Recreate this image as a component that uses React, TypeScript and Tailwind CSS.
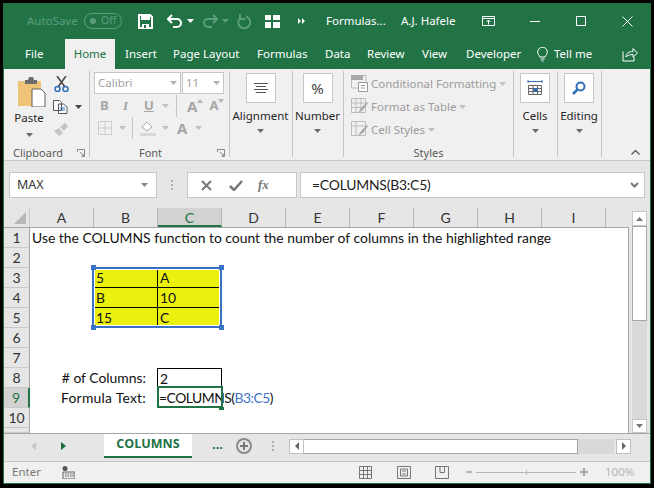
import { FunctionComponent, ReactNode } from "react";

const Caret: FunctionComponent<{ c?: string; className?: string }> = ({ c = "#6b6b6b", className = "" }) => (
  <svg width="7" height="4" viewBox="0 0 7 4" className={`shrink-0 ${className}`}>
    <path d="M0 0h7L3.5 4z" fill={c} />
  </svg>
);

const TinyUp: FunctionComponent<{ c?: string; down?: boolean; className?: string }> = ({ c = "#b5b5b5", down, className = "" }) => (
  <svg width="6" height="4" viewBox="0 0 6 4" className={className}>
    <path d={down ? "M0 0h6L3 4z" : "M3 0l3 4H0z"} fill={c} />
  </svg>
);

const TitleBar: FunctionComponent = () => (
  <div className="h-[36px] flex flex-row items-center text-white text-[11.5px] relative">
    <span className="ml-[23px] w-[57px] shrink-0 text-[#5c9c7d]">AutoSave</span>
    <div className="w-[38px] h-[16px] rounded-full border border-[#5c9c7d] flex flex-row items-center text-[#5c9c7d] text-[10.5px] shrink-0">
      <span className="w-[6px] h-[6px] rounded-full bg-[#5c9c7d] ml-[5px] mr-[5px]" />
      <span>Off</span>
    </div>
    <svg width="15" height="15" viewBox="0 0 15 15" className="ml-[16px] shrink-0">
      <path d="M1 1h11l2 2v11H1z" fill="none" stroke="#fff" strokeWidth="2" />
      <path d="M3 2h9v4H3zM4 10h7v4H4z" fill="#fff" />
      <path d="M6 11h2v3H6z" fill="#217346" />
    </svg>
    <svg width="16" height="14" viewBox="0 0 16 14" className="ml-[14px] shrink-0">
      <path d="M1 5h9a4 4 0 0 1 0 8H6M5 1 1 5l4 4" fill="none" stroke="#fff" strokeWidth="2" />
    </svg>
    <Caret c="#fff" className="ml-[4px]" />
    <svg width="16" height="14" viewBox="0 0 16 14" className="ml-[8px] shrink-0">
      <path d="M15 5H6a4 4 0 0 0 0 8h4M11 1l4 4-4 4" fill="none" stroke="#5c9c7d" strokeWidth="2" />
    </svg>
    <Caret c="#5c9c7d" className="ml-[4px]" />
    <svg width="14" height="15" viewBox="0 0 14 15" className="ml-[8px] shrink-0">
      <path d="M9 2.5a6 6 0 1 1-6 1.5M3 0v5h5" fill="none" stroke="#5c9c7d" strokeWidth="2" />
    </svg>
    <svg width="15" height="13" viewBox="0 0 15 13" className="ml-[14px] shrink-0">
      <path d="M0 0h6v5H0zM8 0h7v5H8zM0 7h6v6H0zM8 7h7v6H8z" fill="#fff" />
    </svg>
    <svg width="7" height="6" viewBox="0 0 7 6" className="ml-[18px] shrink-0">
      <path d="M0 0l3 3-3 3zM4 0l3 3-3 3z" fill="#fff" />
    </svg>
    <span className="ml-[21px] w-[75px] shrink-0">Formulas...</span>
    <span className="w-[81px] shrink-0">A.J. Hafele</span>
    <svg width="13" height="10" viewBox="0 0 13 10" className="shrink-0">
      <path d="M.5.5h12v9H.5zM.5 2.500h12M6.500 8.500V4M4.500 6l2-2 2 2" fill="none" stroke="#fff" />
    </svg>
    <span className="w-[10px] h-px bg-white ml-[35px] shrink-0" />
    <span className="w-[10px] h-[10px] border border-white ml-[36px] shrink-0" />
    <svg width="11" height="11" viewBox="0 0 11 11" className="ml-[36px] shrink-0">
      <path d="M.5.5l10 10M10.500.5l-10 10" stroke="#fff" />
    </svg>
  </div>
);

const tabs = [
  { label: "Insert", cls: "w-[48px] pl-[10px]" },
  { label: "Page Layout", cls: "w-[84px] pl-[10px]" },
  { label: "Formulas", cls: "w-[68px] pl-[10px]" },
  { label: "Data", cls: "w-[43px] pl-[10px]" },
  { label: "Review", cls: "w-[55px] pl-[9px]" },
  { label: "View", cls: "w-[44px] pl-[9px]" },
  { label: "Developer", cls: "w-[71px] pl-[9px]" },
];

const TabBar: FunctionComponent = () => (
  <div className="h-[30px] flex flex-row items-stretch text-white text-[11.5px]">
    <span className="w-[61px] pl-[21px] flex items-center">File</span>
    <span className="w-[50px] bg-[#f0f0f0] text-[#217346] flex items-center justify-center">Home</span>
    {tabs.map((t) => (
      <span key={t.label} className={`flex items-center shrink-0 ${t.cls}`}>
        {t.label}
      </span>
    ))}
    <div className="flex flex-row items-center ml-[9px]">
      <svg width="11" height="15" viewBox="0 0 11 15" className="shrink-0">
        <path d="M3 10C2 8 .7 7.500.7 5a4.800 4.800 0 0 1 9.600 0C10.300 7.500 9 8 8 10zM3.500 12h4M4.500 14h2" fill="none" stroke="#fff" />
      </svg>
      <span className="ml-[6px] w-[68px] shrink-0">Tell me</span>
      <svg width="16" height="15" viewBox="0 0 16 15" className="shrink-0">
        <path d="M1 4.500V14h11V10M4 10c0-4 3-5.500 7-5.500V1.500l4.500 4.500L11 10V7.500C8 7.500 6 8 4 10z" fill="none" stroke="#fff" />
      </svg>
    </div>
  </div>
);

const Group: FunctionComponent<{ w: string; label?: string; expand?: boolean; children: ReactNode }> = ({
  w,
  label,
  expand,
  children,
}) => (
  <div className={`h-[86px] mt-[2px] border-r border-[#c6c6c6] flex flex-col relative shrink-0 ${w}`}>
    <div className="flex-1 min-h-0">{children}</div>
    <div className={`h-[18px] text-center text-[11px] leading-[27px] text-[#5a5a5a] ${expand ? "pr-[18px]" : ""}`}>{label}</div>
    {expand && (
      <svg width="8" height="8" viewBox="0 0 8 8" className="absolute right-[4px] bottom-0">
        <path d="M.5 3V.5h7v7H5M3 3l4 4M4.500 7H7V4.500" fill="none" stroke="#8a8a8a" />
      </svg>
    )}
  </div>
);

const BigButton: FunctionComponent<{ w: string; label: string; children: ReactNode }> = ({ w, label, children }) => (
  <div className={`flex flex-col items-center ${w}`}>
    <div className="w-[30px] h-[30px] mt-[2px] bg-white border border-[#c6c6c6] flex items-center justify-center">{children}</div>
    <span className="text-[11.5px] leading-[16px] text-[#262626] mt-[5px] whitespace-nowrap">{label}</span>
    <Caret className="mt-[5px]" />
  </div>
);

const StyleRow: FunctionComponent<{ label: string; children: ReactNode }> = ({ label, children }) => (
  <div className="h-[23px] flex flex-row items-center text-[#9c9c9c] text-[11.5px]">
    <span className="w-[17px] h-[17px] mr-[3px] ml-[7px] shrink-0">{children}</span>
    <span className="whitespace-nowrap">{label}</span>
    <Caret c="#c0c0c0" className="ml-[3px]" />
  </div>
);

const Ribbon: FunctionComponent = () => (
  <div className="h-[92px] bg-[#f0f0f0] flex flex-row pl-[1px] border-b border-[#c9c9c9] box-border relative">
    <Group w="w-[85px]" label="Clipboard" expand>
      <div className="flex flex-row">
        <div className="w-[48px] flex flex-col items-center">
          <svg width="29" height="30" viewBox="0 0 29 30" className="mt-[6px] ml-[4px]">
            <path d="M1 4h23v25H1z" fill="#efc477" />
            <path d="M8 3h3l1-3h4l1 3h3v4H8z" fill="#6d6d6d" />
            <path d="M15 12h9l4 4v14H15z" fill="#fff" stroke="#5f5f5f" />
          </svg>
          <span className="text-[11.5px] leading-[16px] text-[#262626] mt-[3px]">Paste</span>
          <Caret className="mt-[7px]" />
        </div>
        <div className="flex flex-col">
          <svg width="15" height="16" viewBox="0 0 15 16" className="mt-[5px] ml-[1px]">
            <path d="M3 0l8 11M12 0 4 11" stroke="#444" strokeWidth="1.500" />
            <circle cx="3.500" cy="13" r="2.500" fill="none" stroke="#2f6fb5" strokeWidth="1.500" />
            <circle cx="11.500" cy="13" r="2.500" fill="none" stroke="#2f6fb5" strokeWidth="1.500" />
          </svg>
          <div className="flex flex-row items-center mt-[8px]">
            <svg width="15" height="14" viewBox="0 0 15 14">
              <path d="M.5.500h6l2 2v8H.5zM5.500 4h5l3.500 3v6.500H5.500z" fill="#fff" stroke="#555" />
              <path d="M7 8h5M7 10h5" stroke="#2f6fb5" />
            </svg>
            <Caret c="#444" className="ml-[7px]" />
          </div>
          <svg width="18" height="14" viewBox="0 0 18 14" className="mt-[9px]">
            <path d="M1 8l5-3 4 5-4 3zM7 4l5-4 3 3-4 5z" fill="#c4c4c4" />
          </svg>
        </div>
      </div>
    </Group>
    <Group w="w-[140px]" label="Font" expand>
      <div className="flex flex-row mt-[1px] ml-[4px]">
        <div className="w-[87px] h-[22px] bg-white border border-[#c6c6c6] flex flex-row items-center justify-between px-[3px] text-[11.5px] text-[#a0a0a0]">
          Calibri
          <Caret c="#b0b0b0" />
        </div>
        <div className="w-[42px] h-[22px] ml-[1px] bg-white border border-[#c6c6c6] flex flex-row items-center justify-between px-[3px] text-[11.5px] text-[#a0a0a0]">
          11
          <Caret c="#b0b0b0" />
        </div>
      </div>
      <div className="flex flex-row items-center h-[22px] ml-[10px] mt-[1px] text-[#a6a6a6] text-[13px]">
        <b className="w-[23px]">B</b>
        <i className="w-[21px] font-['Liberation_Serif',serif] font-bold">I</i>
        <u className="font-bold w-[14px]">U</u>
        <Caret c="#c0c0c0" className="ml-[4px]" />
        <span className="w-px h-[22px] bg-[#c6c6c6] ml-[7px]" />
        <span className="ml-[10px] text-[15px] font-bold">A</span>
        <TinyUp className="mb-[10px]" />
        <span className="ml-[6px] text-[13px] font-bold">A</span>
        <TinyUp down className="mb-[10px]" />
      </div>
      <div className="flex flex-row items-center h-[22px] ml-[8px]">
        <svg width="14" height="14" viewBox="0 0 14 14" className="shrink-0">
          <path d="M.5.500h13v13H.5zM7 .5v13M.5 7h13" fill="none" stroke="#aaa" strokeDasharray="1 1" />
        </svg>
        <Caret c="#c0c0c0" className="ml-[7px]" />
        <span className="w-px h-[22px] bg-[#c6c6c6] ml-[6px]" />
        <svg width="16" height="16" viewBox="0 0 16 16" className="ml-[7px] shrink-0">
          <path d="M2 7l5-5 5 5-5 4z" fill="#fff" stroke="#aaa" />
          <path d="M0 13h16v3H0z" fill="#d8d8d8" />
        </svg>
        <Caret c="#c0c0c0" className="ml-[6px]" />
        <span className="ml-[8px] text-[15px] font-bold text-[#a6a6a6] leading-none">A</span>
        <Caret c="#c0c0c0" className="ml-[8px]" />
      </div>
    </Group>
    <Group w="w-[63px]">
      <BigButton w="w-[61px]" label="Alignment">
        <svg width="14" height="10" viewBox="0 0 14 10">
          <path d="M0 .5h14M2 3.500h10M0 6.500h14M2 9.500h10" stroke="#555" />
        </svg>
      </BigButton>
    </Group>
    <Group w="w-[51px]">
      <BigButton w="w-[49px]" label="Number">
        <span className="text-[15px] text-[#444]">%</span>
      </BigButton>
    </Group>
    <Group w="w-[170px]" label="Styles">
      <div className="pt-[1px]">
        <StyleRow label="Conditional Formatting">
          <svg viewBox="0 0 17 17" className="w-[17px] h-[17px]">
            <path d="M0 0h12v5H0z" fill="#a8a8a8" />
            <path d="M.5 5v8h7M12 .5h3v6" fill="none" stroke="#bbb" />
            <path d="M7.500 7.500h9v9h-9zM10 10.500h4M10 13h4" fill="#fff" stroke="#999" />
          </svg>
        </StyleRow>
        <StyleRow label="Format as Table">
          <svg viewBox="0 0 17 17" className="w-[17px] h-[17px]">
            <path d="M.5.500h14v14H.5zM.5 5h14M.5 9.500h14M5 .5v14M10 .5v14" fill="none" stroke="#bbb" />
            <path d="M7 15l3-5 6-6 1 1-5 7z" fill="#aaa" />
          </svg>
        </StyleRow>
        <StyleRow label="Cell Styles">
          <svg viewBox="0 0 17 17" className="w-[17px] h-[17px]">
            <path d="M.5.500h14v14H.5zM.5 5h14M5 .5v14" fill="none" stroke="#bbb" />
            <path d="M7 15l3-5 6-6 1 1-5 7z" fill="#aaa" />
          </svg>
        </StyleRow>
      </div>
    </Group>
    <Group w="w-[44px]">
      <BigButton w="w-[42px]" label="Cells">
        <svg width="16" height="16" viewBox="0 0 16 16">
          <path d="M1 1.500h14M1 0v3M15 0v3" stroke="#2f6fb5" fill="none" />
          <path d="M1.500 5.500h13v9h-13zM1.500 8.500h13M1.500 11.500h13M6 5.500v9M10.500 5.500v9" stroke="#666" fill="none" />
          <path d="M6 8.500h5v3H6z" fill="#2f6fb5" />
        </svg>
      </BigButton>
    </Group>
    <Group w="w-[44px]">
      <BigButton w="w-[42px]" label="Editing">
        <svg width="14" height="14" viewBox="0 0 14 14">
          <circle cx="8.500" cy="5.500" r="4" fill="none" stroke="#2f6fb5" strokeWidth="2" />
          <path d="M5.500 8.500 1 13" stroke="#2f6fb5" strokeWidth="2.500" />
        </svg>
      </BigButton>
    </Group>
    <svg width="9" height="5" viewBox="0 0 9 5" className="absolute right-[10px] bottom-[5px]">
      <path d="M.5 4.500l4-4 4 4" fill="none" stroke="#555" strokeWidth="1.300" />
    </svg>
  </div>
);

const FormulaBar: FunctionComponent = () => (
  <div className="h-[47px] bg-[#e6e6e6] flex flex-row items-start pt-[11px] pl-[5px] box-border">
    <div className="w-[148px] h-[26px] bg-white border border-[#c6c6c6] flex flex-row items-center justify-between pl-[7px] pr-[8px] text-[12.5px] text-[#333]">
      MAX
      <Caret c="#888" />
    </div>
    <div className="w-[30px] h-[26px] flex items-center justify-center">
      <span className="w-[2px] h-[10px] border-l-2 border-dotted border-[#b0b0b0]" />
    </div>
    <div className="w-[110px] h-[26px] bg-white border border-[#c6c6c6] flex flex-row items-center text-[#777]">
      <svg width="11" height="11" viewBox="0 0 11 11" className="ml-[13px]">
        <path d="M1 1l9 9M10 1l-9 9" stroke="#777" strokeWidth="2" />
      </svg>
      <svg width="14" height="11" viewBox="0 0 14 11" className="ml-[17px]">
        <path d="M1 6l4 4 8-9" fill="none" stroke="#777" strokeWidth="2.500" />
      </svg>
      <i className="ml-[15px] text-[13px] font-['Liberation_Serif',serif] font-bold">fx</i>
    </div>
    <div className="w-[345px] h-[26px] ml-[3px] bg-white border border-[#c6c6c6] flex flex-row items-center justify-between pl-[11px] pr-[5px] font-['Lato',sans-serif] text-[13.9px] tracking-[-0.2px] text-[#222]">
      =COLUMNS(B3:C5)
      <svg width="9" height="6" viewBox="0 0 9 6">
        <path d="M1 1l3.500 3.500L8 1" fill="none" stroke="#777" strokeWidth="2" />
      </svg>
    </div>
  </div>
);

const columns = ["A", "B", "C", "D", "E", "F", "G", "H", "I"];

const Cell: FunctionComponent<{ className?: string; children?: ReactNode }> = ({ className = "", children }) => (
  <div className={`h-[20px] w-[64px] shrink-0 leading-[20px] pl-[2px] box-border whitespace-nowrap ${className}`}>{children}</div>
);

const Row: FunctionComponent<{ n: number; short?: boolean; children?: ReactNode }> = ({ n, short, children }) => (
  <div className={`flex flex-row overflow-hidden ${short ? "h-[5px]" : "h-[20px]"}`}>
    <div
      className={`w-[26px] shrink-0 text-center text-[14px] leading-[20px] border-b border-[#c9c9c9] border-r box-border ${
        n === 9 ? "bg-[#d2d2d2] border-r-2 border-r-[#217346] text-[#217346]" : "bg-[#e6e6e6] border-r-[#a6a6a6] text-[#333]"
      }`}
    >
      {!short && n}
    </div>
    {children}
  </div>
);

const Sheet: FunctionComponent = () => (
  <div className="h-[225px] bg-[#e6e6e6] flex flex-row relative font-['Lato',sans-serif]">
    <div className="w-[625px] shrink-0 flex flex-col">
      {/* column letters */}
      <div className="h-[20px] flex flex-row border-b border-[#a6a6a6] box-border">
        <div className="w-[26px] shrink-0 border-r border-[#c9c9c9] flex items-end justify-end p-[3px]">
          <svg width="12" height="12" viewBox="0 0 12 12">
            <path d="M12 0v12H0z" fill="#b8b8b8" />
          </svg>
        </div>
        {columns.map((c) => (
          <div
            key={c}
            className={`w-[64px] h-[19px] shrink-0 text-center text-[14px] leading-[19px] border-r border-[#b5b5b5] box-border ${
              c === "C" ? "bg-[#d2d2d2] border-b-2 border-b-[#217346] text-[#217346]" : "text-[#333]"
            }`}
          >
            {c}
          </div>
        ))}
      </div>
      <div className="flex-1 flex flex-col relative text-[13.9px] text-[#111] border-b border-r border-[#a6a6a6] box-border">
        <Row n={1}>
          <div className="bg-white flex-1 leading-[20px] pl-[2px] whitespace-nowrap">
            Use the COLUMNS function to count the number of columns in the highlighted range
          </div>
        </Row>
        <Row n={2}>
          <div className="bg-white flex-1" />
        </Row>
        {[
          ["5", "A"],
          ["B", "10"],
          ["15", "C"],
        ].map((r, i) => (
          <Row key={i} n={i + 3}>
            <div className="bg-white flex-1 flex flex-row">
              <Cell />
              <Cell className={`bg-[#ecf00e] border-r border-r-black ${i < 2 ? "border-b border-b-black" : ""}`}>{r[0]}</Cell>
              <Cell className={`bg-[#ecf00e] ${i < 2 ? "border-b border-b-black" : ""}`}>{r[1]}</Cell>
            </div>
          </Row>
        ))}
        <Row n={6}>
          <div className="bg-white flex-1" />
        </Row>
        <Row n={7}>
          <div className="bg-white flex-1" />
        </Row>
        <Row n={8}>
          <div className="bg-white flex-1 flex flex-row">
            <Cell className="w-[127px] text-right pr-[11px]"># of Columns:</Cell>
            <Cell className="w-[65px] border border-black">2</Cell>
          </div>
        </Row>
        <Row n={9}>
          <div className="bg-white flex-1 flex flex-row">
            <Cell className="w-[127px] text-right pr-[11px] tracking-[0.25px]">Formula Text:</Cell>
            <Cell className="tracking-[-0.5px]">
              =COLUMNS(<span className="text-[#3f74c7]">B3:C5</span>)
            </Cell>
          </div>
        </Row>
        <Row n={10}>
          <div className="bg-white flex-1" />
        </Row>
        <Row n={11} short>
          <div className="bg-white flex-1" />
        </Row>
        {/* range selection for B3:C5 */}
        <div className="absolute left-[88px] top-[39px] w-[130px] h-[61px] border-[2px] border-[#3a71c4] pointer-events-none">
          <span className="absolute inset-0 border border-white" />
          <span className="absolute -left-[3px] -top-[4px] w-[5px] h-[5px] bg-[#3a71c4]" />
          <span className="absolute -right-[4px] -top-[4px] w-[5px] h-[5px] bg-[#3a71c4]" />
          <span className="absolute -left-[3px] -bottom-[4px] w-[5px] h-[5px] bg-[#3a71c4]" />
          <span className="absolute -right-[4px] -bottom-[4px] w-[5px] h-[5px] bg-[#3a71c4]" />
        </div>
        {/* active cell C9 */}
        <div className="absolute left-[153px] top-[158px] w-[66px] h-[22px] border-2 border-[#217346] pointer-events-none" />
        <span className="absolute left-[215px] top-[179px] w-[5px] h-[3px] bg-[#217346]" />
      </div>
    </div>
    {/* vertical scrollbar */}
    <div className="w-[15px] ml-[3px] mt-[3px] flex flex-col bg-[#d9d9d9]">
      <div className="h-[15px] bg-white border border-[#c6c6c6] flex items-center justify-center">
        <svg width="7" height="4" viewBox="0 0 7 4">
          <path d="M3.500 0 7 4H0z" fill="#777" />
        </svg>
      </div>
      <div className="h-[95px] bg-white border border-[#a6a6a6]" />
      <div className="flex-1" />
      <div className="h-[14px] bg-white border border-[#c6c6c6] flex items-center justify-center">
        <Caret c="#777" />
      </div>
    </div>
  </div>
);

const SheetTabs: FunctionComponent = () => (
  <div className="h-[28px] pb-[3px] box-border bg-[#e6e6e6] flex flex-row items-stretch">
    <div className="w-[100px] flex flex-row items-center border-t border-[#a6a6a6] box-border">
      <span className="ml-[27px] w-0 h-0 border-y-[4px] border-y-transparent border-r-[5px] border-r-[#c6c6c6]" />
      <span className="ml-[25px] w-0 h-0 border-y-[4px] border-y-transparent border-l-[5px] border-l-[#1c6b3d]" />
    </div>
    <div className="w-[88px] bg-white border-b-2 border-[#217346] text-[#217346] font-['Open_Sans',sans-serif] font-bold text-[12.5px] flex items-center justify-center box-border">
      COLUMNS
    </div>
    <div className="flex-1 flex flex-row items-center border-t border-[#a6a6a6] box-border">
      <span className="ml-[20px] w-[24px] font-bold text-[#217346] text-[13px] leading-none -mt-[4px]">...</span>
      <div className="w-[16px] h-[16px] rounded-full border-2 border-[#8a8a8a] flex items-center justify-center shrink-0">
        <svg width="8" height="8" viewBox="0 0 8 8">
          <path d="M4 0v8M0 4h8" stroke="#777" strokeWidth="2" />
        </svg>
      </div>
      <span className="ml-[20px] w-[2px] h-[10px] border-l-2 border-dotted border-[#b0b0b0]" />
      <div className="ml-[15px] w-[15px] h-[15px] bg-white border border-[#c0c0c0] flex items-center justify-center shrink-0">
        <span className="w-0 h-0 border-y-[4px] border-y-transparent border-r-[4px] border-r-[#666]" />
      </div>
      <div className="w-[274px] h-[15px] bg-white border-y border-r border-[#a6a6a6] box-border shrink-0" />
      <div className="w-[36px] h-[15px] bg-[#d9d9d9] shrink-0" />
      <div className="ml-[2px] w-[15px] h-[15px] bg-white border border-[#c0c0c0] flex items-center justify-center shrink-0">
        <span className="w-0 h-0 border-y-[4px] border-y-transparent border-l-[4px] border-l-[#666]" />
      </div>
    </div>
  </div>
);

const StatusBar: FunctionComponent = () => (
  <div className="h-[22px] bg-[#f0f0f0] border-t border-[#c6c6c6] box-border flex flex-row items-center pb-[1px] text-[11.5px] text-[#777]">
    <span className="ml-[8px] w-[50px] shrink-0">Enter</span>
    <svg width="13" height="13" viewBox="0 0 13 13" className="shrink-0">
      <circle cx="3" cy="2.500" r="2.500" fill="#555" />
      <path d="M1 6h12v7H1z" fill="#e8e8e8" stroke="#666" />
      <path d="M3 8h9M3 10h9" stroke="#666" strokeDasharray="1.500 1" />
    </svg>
    <svg width="13" height="13" viewBox="0 0 13 13" className="ml-[284px] shrink-0">
      <path d="M.5.500h12v12H.5zM.5 4.500h12M.5 8.500h12M4.500.5v12M8.500.5v12" fill="none" stroke="#777" />
    </svg>
    <svg width="14" height="13" viewBox="0 0 14 13" className="ml-[25px] shrink-0">
      <path d="M.5.500h13v12H.5z" fill="none" stroke="#777" />
      <path d="M3.500 3h7v7h-7zM5 5h4M5 8h4" fill="none" stroke="#777" />
    </svg>
    <svg width="14" height="13" viewBox="0 0 14 13" className="ml-[24px] shrink-0">
      <path d="M.5.500h13v12H.5zM5 .5v6h4.500V.5" fill="none" stroke="#777" />
    </svg>
    <span className="ml-[17px] w-[6px] h-[2px] bg-[#b5b5b5] shrink-0" />
    <div className="ml-[4px] w-[100px] h-px bg-[#b5b5b5] flex justify-center items-center shrink-0">
      <span className="w-px h-[5px] bg-[#b5b5b5]" />
    </div>
    <svg width="8" height="8" viewBox="0 0 8 8" className="ml-[4px] shrink-0">
      <path d="M4 0v8M0 4h8" stroke="#a6a6a6" strokeWidth="2" />
    </svg>
    <span className="ml-[17px] text-[#b5b5b5] shrink-0">100%</span>
  </div>
);

const App: FunctionComponent = () => {
  return (
    <div className="w-[654px] h-[488px] bg-black pt-[3px] px-[3px] pb-[4px] box-border font-['Noto_Sans',sans-serif] overflow-hidden">
      <div className="w-[648px] h-[481px] bg-[#217346] pl-px pr-px pb-px box-border flex flex-col">
        <TitleBar />
        <TabBar />
        <Ribbon />
        <FormulaBar />
        <Sheet />
        <SheetTabs />
        <StatusBar />
      </div>
    </div>
  );
};

export default App;
